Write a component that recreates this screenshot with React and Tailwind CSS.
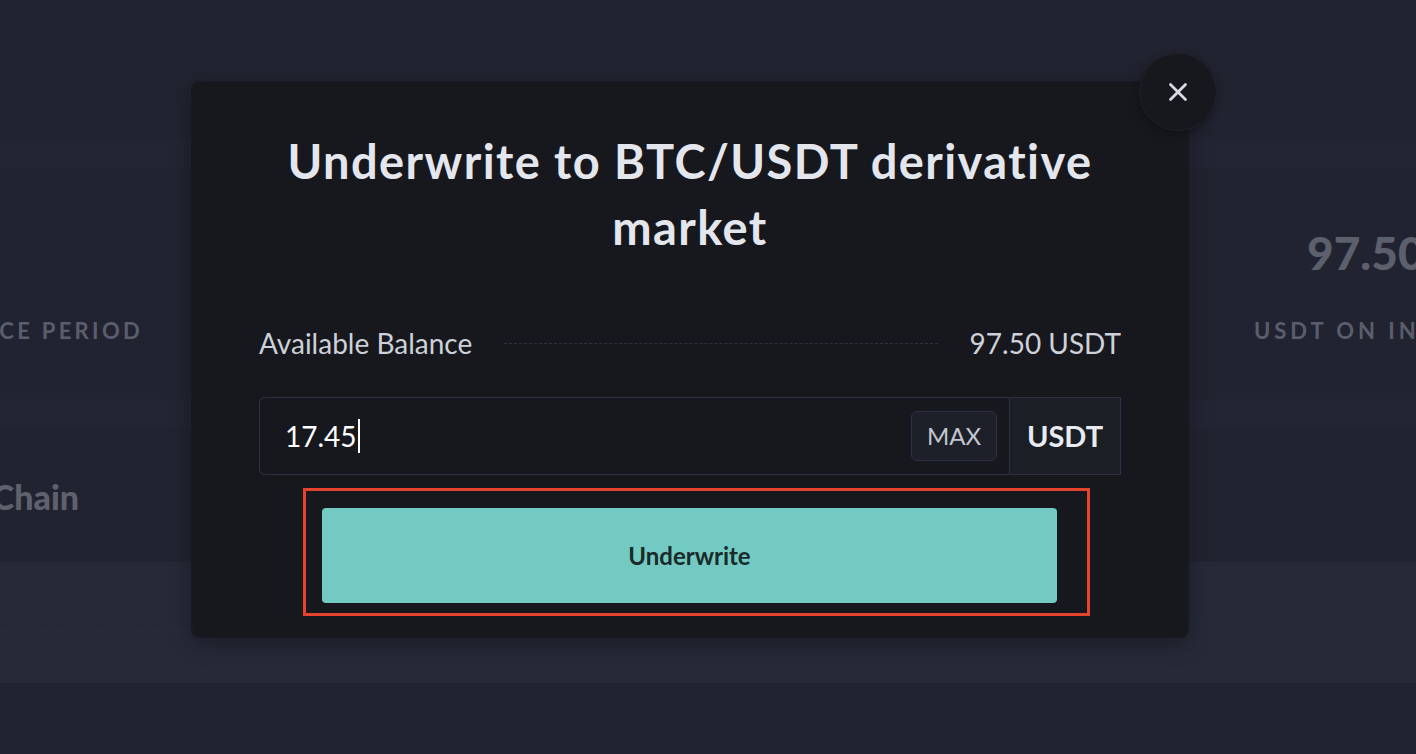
import { X } from "lucide-react";

const font = { fontFamily: "Lato, 'Noto Sans', sans-serif" };

const Backdrop = () => (
  <div className="flex flex-col">
    <div className="h-[139px]" />
    <div className="h-[29px] bg-[#232533]" />
    {/* stats row */}
    <div className="h-[231px] flex justify-between">
      <div className="w-[143px] flex justify-end pt-[152px]">
        <span className="whitespace-nowrap text-[22px] font-bold tracking-[0.15em] text-[#5a5e6c] leading-none">
          INSURANCE PERIOD
        </span>
      </div>
      <div className="w-[162px] flex flex-col pt-[62px]">
        <span className="pl-[53px] whitespace-nowrap text-[46px] font-black text-[#5c5f6c] leading-none">
          97.50 USDT
        </span>
        <span className="mt-[44px] whitespace-nowrap text-[22px] font-bold tracking-[0.18em] text-[#5a5e6c] leading-none">
          USDT ON INSURANCE
        </span>
      </div>
    </div>
    <div className="h-[29px] bg-[#232533]" />
    <div className="h-[134px] flex">
      <div className="w-[79px] flex justify-end pt-[52px]">
        <span className="whitespace-nowrap text-[34px] font-black text-[#5e616e] leading-none">
          Smart Chain
        </span>
      </div>
    </div>
    <div className="h-[121px] bg-[#262937] flex flex-col justify-end pb-[52px]">
      <div className="border-t border-dashed border-[#2b2e3d] w-[200px]" />
    </div>
    <div className="h-[71px]" />
  </div>
);

const Modal = () => (
  <div className="absolute left-[193px] top-[83px] w-[994px] rounded-md bg-[#17181d] shadow-[0_0_0_2px_rgba(20,21,26,0.6),0_6px_24px_rgba(0,0,0,0.35)] px-[66px] pt-[45px] pb-[20px]">
    <button className="absolute -right-[30px] -top-[30px] w-[78px] h-[78px] rounded-full bg-[#17181d] border border-[#20222a] shadow-[0_2px_10px_rgba(0,0,0,0.35)] flex items-center justify-center">
      <X size={30} strokeWidth={2.2} className="text-[#d6dae1]" />
    </button>

    <h2 className="mx-auto max-w-[840px] text-center text-[47px] font-bold tracking-[0.03em] leading-[66px] text-[#e3e7ed]">
      Underwrite to BTC/USDT derivative market
    </h2>

    <div className="mt-[67px] flex items-center h-[32px] text-[28px] text-[#cdd1d9]">
      <span>Available Balance</span>
      <div className="flex-1 mx-[32px] border-t border-dashed border-[#2e313c]" />
      <span>97.50 USDT</span>
    </div>

    <div className="mt-[38px] flex h-[78px]">
      <div className="flex-1 flex items-center rounded-l-md border border-[#2c3145] pl-[25px] pr-[12px]">
        <span className="text-[28px] text-white leading-none">17.45</span>
        <span className="ml-[1px] w-[2px] h-[34px] bg-white" />
        <div className="ml-auto w-[86px] h-[50px] rounded-md border border-[#2d3145] bg-[#1e2029] flex items-center justify-center text-[24px] text-[#c2c6cf]">
          MAX
        </div>
      </div>
      <div className="w-[111px] flex items-center justify-center border border-l-0 border-[#2c3145] bg-[#1c1e26] text-[29px] font-bold text-[#e8ebf0]">
        USDT
      </div>
    </div>

    <div className="mt-[13px] ml-[44px] mr-[31px] border-[3px] border-[#e5432d] pl-[16px] pr-[30px] pt-[17px] pb-[10px]">
      <button className="w-full h-[95px] rounded bg-[#72cac3] text-[24px] font-bold text-[#1b2b2a]">
        Underwrite
      </button>
    </div>
  </div>
);

export default function App() {
  return (
    <div style={font} className="relative w-[1416px] h-[754px] overflow-hidden bg-[#212430]">
      <Backdrop />
      <Modal />
    </div>
  );
}
